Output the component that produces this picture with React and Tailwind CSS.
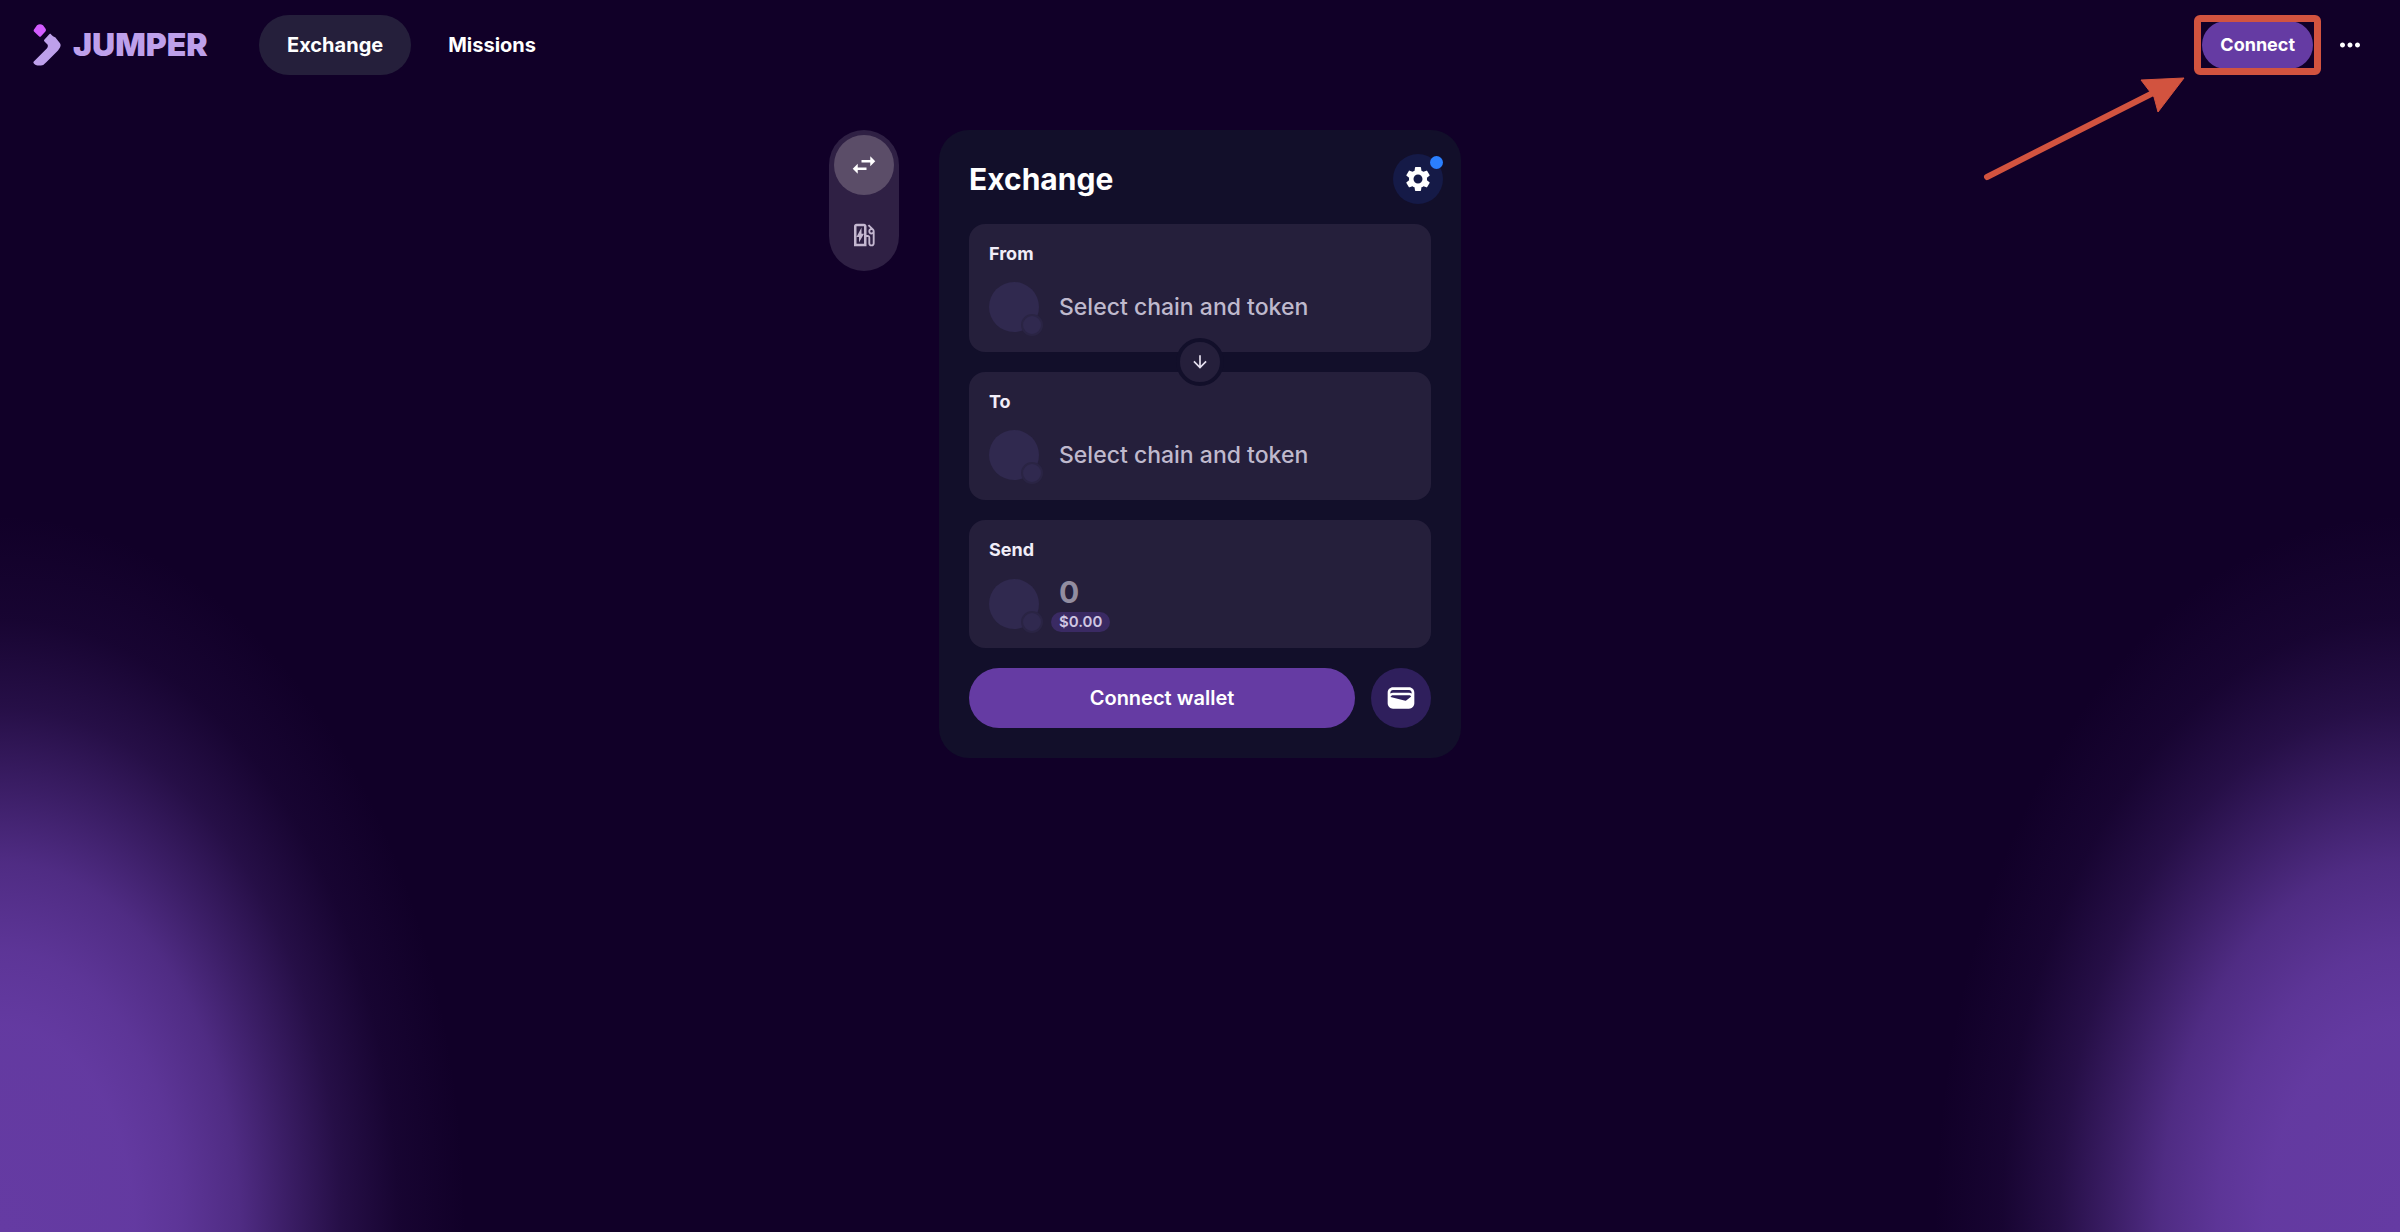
import React from 'react';
import {
  MdArrowDownward,
  MdMoreHoriz,
  MdOutlineEvStation,
  MdSettings,
  MdSwapHoriz,
  MdWallet,
} from 'react-icons/md';

function Logo() {
  return (
    <a href="#home" aria-label="Jumper home" className="flex w-[226px] items-center gap-3 text-[#bea0eb]">
      <svg viewBox="0 0 28 42" className="h-[42px] w-7" aria-hidden="true">
        <path
          d="M4 1.300Q7-.8 10 1.300L12.400 4.400Q13.500 6 12.400 7.400L7.800 12.400Q7 13 6.200 12.400L1 7.500Q.3 6.600 1 5.600Z"
          fill="#d35cff"
        />
        <path
          d="M17.500 9.800Q18.500 11.200 20 12.200Q23 13 24 15.500L26.800 19Q28.300 21 27 23.500L25 26.500 13 38.500Q10.500 41.500 8 41.500H4.500Q2.500 41.300 1.300 40L.7 39.200Q0 38.200.8 37.400L13.800 24.400Q15.500 22.500 14.500 20.500L11.500 17.400Q10.500 16.400 11.500 15.400L16.500 10Q17 9.400 17.500 9.800Z"
          fill="currentColor"
        />
      </svg>
      <span className="text-[32px] leading-10 font-black">JUMPER</span>
    </a>
  );
}

function Header() {
  return (
    <header className="flex h-[89px] items-center justify-between pr-[35px] pl-[33px]">
      <div className="flex items-center">
        <Logo />
        <nav className="flex items-center gap-[13px] text-xl font-bold">
          <a href="#exchange" className="flex h-15 items-center rounded-full bg-[#251f3b] px-7">
            Exchange
          </a>
          <a href="#missions" className="flex h-15 items-center rounded-full px-6">
            Missions
          </a>
        </nav>
      </div>
      <div className="flex items-center gap-[22px]">
        <div className="relative">
          <button type="button" className="h-12 rounded-full bg-[#653ba3] px-[18px] text-lg font-bold">
            Connect
          </button>
          <div className="pointer-events-none absolute -inset-x-2 -inset-y-1.5 rounded-md border-7 border-[#d2533f]" />
          <svg
            viewBox="0 0 206 106"
            className="pointer-events-none absolute top-[56px] right-[126px] h-[106px] w-[206px]"
            aria-hidden="true"
          >
            <path d="M6 100 172 16" stroke="#d2533f" strokeWidth="6" strokeLinecap="round" />
            <path d="M160 3 203 1 177 35 173 20Z" fill="#d2533f" stroke="#d2533f" strokeLinejoin="round" />
          </svg>
        </div>
        <button type="button" aria-label="More options">
          <MdMoreHoriz className="size-[30px]" />
        </button>
      </div>
    </header>
  );
}

function TokenPlaceholder() {
  return (
    <span className="relative block size-[50px] shrink-0 rounded-full bg-[#30294f]">
      <span className="absolute -right-1 -bottom-1 size-[22px] rounded-full border-2 border-[#2a2444] bg-[#30294f]" />
    </span>
  );
}

function SelectField({ label }) {
  return (
    <button type="button" className="flex h-32 w-full flex-col rounded-2xl bg-[#251f3b] px-5 pt-[18px] text-left">
      <span className="text-lg leading-6 font-bold text-[#f1edf8]">{label}</span>
      <span className="mt-4 flex items-center gap-5">
        <TokenPlaceholder />
        <span className="text-[23px] font-medium text-[#bfb9cd]">Select chain and token</span>
      </span>
    </button>
  );
}

function ModeTabs() {
  return (
    <div className="flex w-[70px] flex-col items-center gap-[22px] self-start justify-self-end rounded-full bg-[#2f2044] px-[5px] pt-[5px] pb-[18px]">
      <button
        type="button"
        aria-label="Exchange"
        className="flex size-[60px] items-center justify-center rounded-full bg-[#5b4d68]"
      >
        <MdSwapHoriz className="size-[30px]" />
      </button>
      <button type="button" aria-label="Gas" className="flex h-9 w-[60px] items-center justify-center text-[#c4b7d0]">
        <MdOutlineEvStation className="size-[30px]" />
      </button>
    </div>
  );
}

function ExchangeCard() {
  return (
    <section className="w-[522px] rounded-[30px] bg-[#120f2a] px-[30px] pt-6 pb-[30px]">
      <div className="mb-5 flex items-center justify-between">
        <h1 className="text-3xl leading-[50px] font-bold">Exchange</h1>
        <button
          type="button"
          aria-label="Settings"
          className="relative -mr-3 flex size-[50px] items-center justify-center rounded-full bg-[#151a47]"
        >
          <MdSettings className="size-[30px]" />
          <span className="absolute top-0.5 right-0 size-[13px] rounded-full bg-[#2b7fff]" />
        </button>
      </div>

      <div className="relative flex flex-col gap-5">
        <SelectField label="From" />
        <SelectField label="To" />
        <button
          type="button"
          aria-label="Swap direction"
          className="absolute top-1/2 left-1/2 flex size-12 -translate-1/2 items-center justify-center rounded-full border-4 border-[#120f2a] bg-[#251f3b] text-[#e6e0f0]"
        >
          <MdArrowDownward className="size-5" />
        </button>
      </div>

      <div className="mt-5 h-32 rounded-2xl bg-[#251f3b] px-5 pt-[18px]">
        <label htmlFor="amount" className="block text-lg leading-6 font-bold text-[#f1edf8]">
          Send
        </label>
        <div className="mt-2.5 flex items-center gap-5">
          <div className="mt-1">
            <TokenPlaceholder />
          </div>
          <div className="flex min-w-0 flex-1 flex-col items-start">
            <input
              id="amount"
              type="text"
              inputMode="decimal"
              placeholder="0"
              className="h-10 w-full bg-transparent text-3xl font-bold placeholder:text-[#928da0] outline-none"
            />
            <span className="-ml-2 rounded-full bg-[#3a2a63] px-2 text-[15px] leading-5 font-semibold text-[#cfc6e2]">
              $0.00
            </span>
          </div>
        </div>
      </div>

      <div className="mt-5 flex gap-4">
        <button type="button" className="h-15 flex-1 rounded-full bg-[#653ba3] text-xl font-semibold">
          Connect wallet
        </button>
        <button
          type="button"
          aria-label="Wallet"
          className="flex size-15 items-center justify-center rounded-full bg-[#2f1f5c]"
        >
          <MdWallet className="size-8" />
        </button>
      </div>
    </section>
  );
}

export default function App() {
  return (
    <div className="min-h-screen bg-[#110028] bg-[radial-gradient(20%_60%_at_0%_100%,#653ba3_0%,#653ba3fa_28%,#653ba3e6_38%,#653ba3bd_50%,#653ba380_60%,#653ba340_71%,#653ba314_83%,#653ba300_97%),radial-gradient(20%_60%_at_100%_100%,#653ba3_0%,#653ba3fa_28%,#653ba3e6_38%,#653ba3bd_50%,#653ba380_60%,#653ba340_71%,#653ba314_83%,#653ba300_97%)] font-['Inter',sans-serif] text-white">
      <Header />
      <main className="grid grid-cols-[1fr_auto_1fr] gap-10 pt-[41px]">
        <ModeTabs />
        <ExchangeCard />
      </main>
    </div>
  );
}
